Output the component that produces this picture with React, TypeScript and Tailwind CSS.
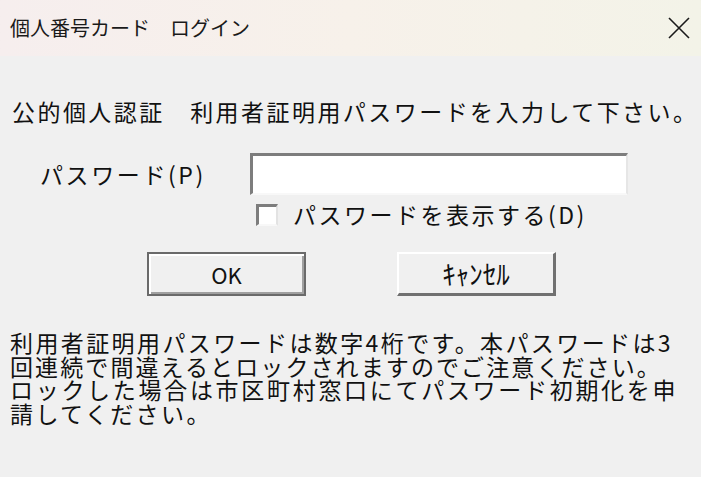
import React from 'react';

const jp = "font-['Noto_Sans_CJK_JP','Noto_Sans_CJK_SC',sans-serif]";

export default function App() {
  return (
    <div className={`w-[701px] h-[477px] bg-[#f0f0f0] text-[#111] flex flex-col overflow-hidden ${jp}`}>
      {/* TITLE BAR */}
      <div className="h-[56px] shrink-0 flex items-center justify-between pl-[10px] pr-[11px] bg-gradient-to-r from-[#f6eeee] via-[#f7f1ea] to-[#f3f3e8]">
        <span className="text-[20px] leading-[22px] text-[#1a1a1a]">個人番号カード　ログイン</span>
        <svg width="22" height="22" viewBox="0 0 22 22" className="mt-[-1px]">
          <path d="M1 1 L21 21 M21 1 L1 21" stroke="#1a1a1a" strokeWidth="1.6" fill="none" />
        </svg>
      </div>

      {/* BODY */}
      <div className="flex flex-col text-[23px] leading-[23px]">
        <p className="mt-[44px] ml-[12px] tracking-[2.45px] whitespace-nowrap">
          公的個人認証　利用者証明用パスワードを入力して下さい。
        </p>

        <div className="mt-[30px] flex items-center">
          <span className="ml-[40px] w-[210px] tracking-[2.6px] whitespace-nowrap">パスワード(P)</span>
          <div className="w-[378px] h-[42px] bg-white border-t-[3px] border-l-[3px] border-b-[2px] border-r-[2px] border-t-[#7d7d7d] border-l-[#7d7d7d] border-b-[#f8f8f8] border-r-[#e6e6e6]" />
        </div>

        <div className="mt-[8px] ml-[256px] flex items-center">
          <div className="w-[22px] h-[22px] bg-white border-t-[3px] border-l-[3px] border-b-[2px] border-r-[2px] border-t-[#7d7d7d] border-l-[#7d7d7d] border-b-[#f8f8f8] border-r-[#e3e3e3]" />
          <span className="ml-[15px] tracking-[2.5px] whitespace-nowrap">パスワードを表示する(D)</span>
        </div>

        <div className="mt-[26px] ml-[147px] flex gap-[91px]">
          <button className="w-[159px] h-[44px] flex items-center justify-center bg-[#f0f0f0] border-[2px] border-[#6a6a6a] shadow-[inset_2px_2px_0_#ffffff,inset_-2px_-2px_0_#a0a0a0] text-[22px] leading-none">
            OK
          </button>
          <button className="w-[159px] h-[44px] flex items-center justify-center bg-[#f0f0f0] border-t-[2px] border-l-[2px] border-b-[3px] border-r-[3px] border-t-[#ffffff] border-l-[#ffffff] border-b-[#707070] border-r-[#707070] text-[27px] leading-none">
            ｷｬﾝｾﾙ
          </button>
        </div>

        <div className="mt-[35px] ml-[10px] leading-[23.5px] tracking-[2.4px] whitespace-nowrap">
          <div>利用者証明用パスワードは数字4桁です。本パスワードは3</div>
          <div className="tracking-[2.1px]">回連続で間違えるとロックされますのでご注意ください。</div>
          <div className="tracking-[2.7px]">ロックした場合は市区町村窓口にてパスワード初期化を申</div>
          <div>請してください。</div>
        </div>
      </div>
    </div>
  );
}
